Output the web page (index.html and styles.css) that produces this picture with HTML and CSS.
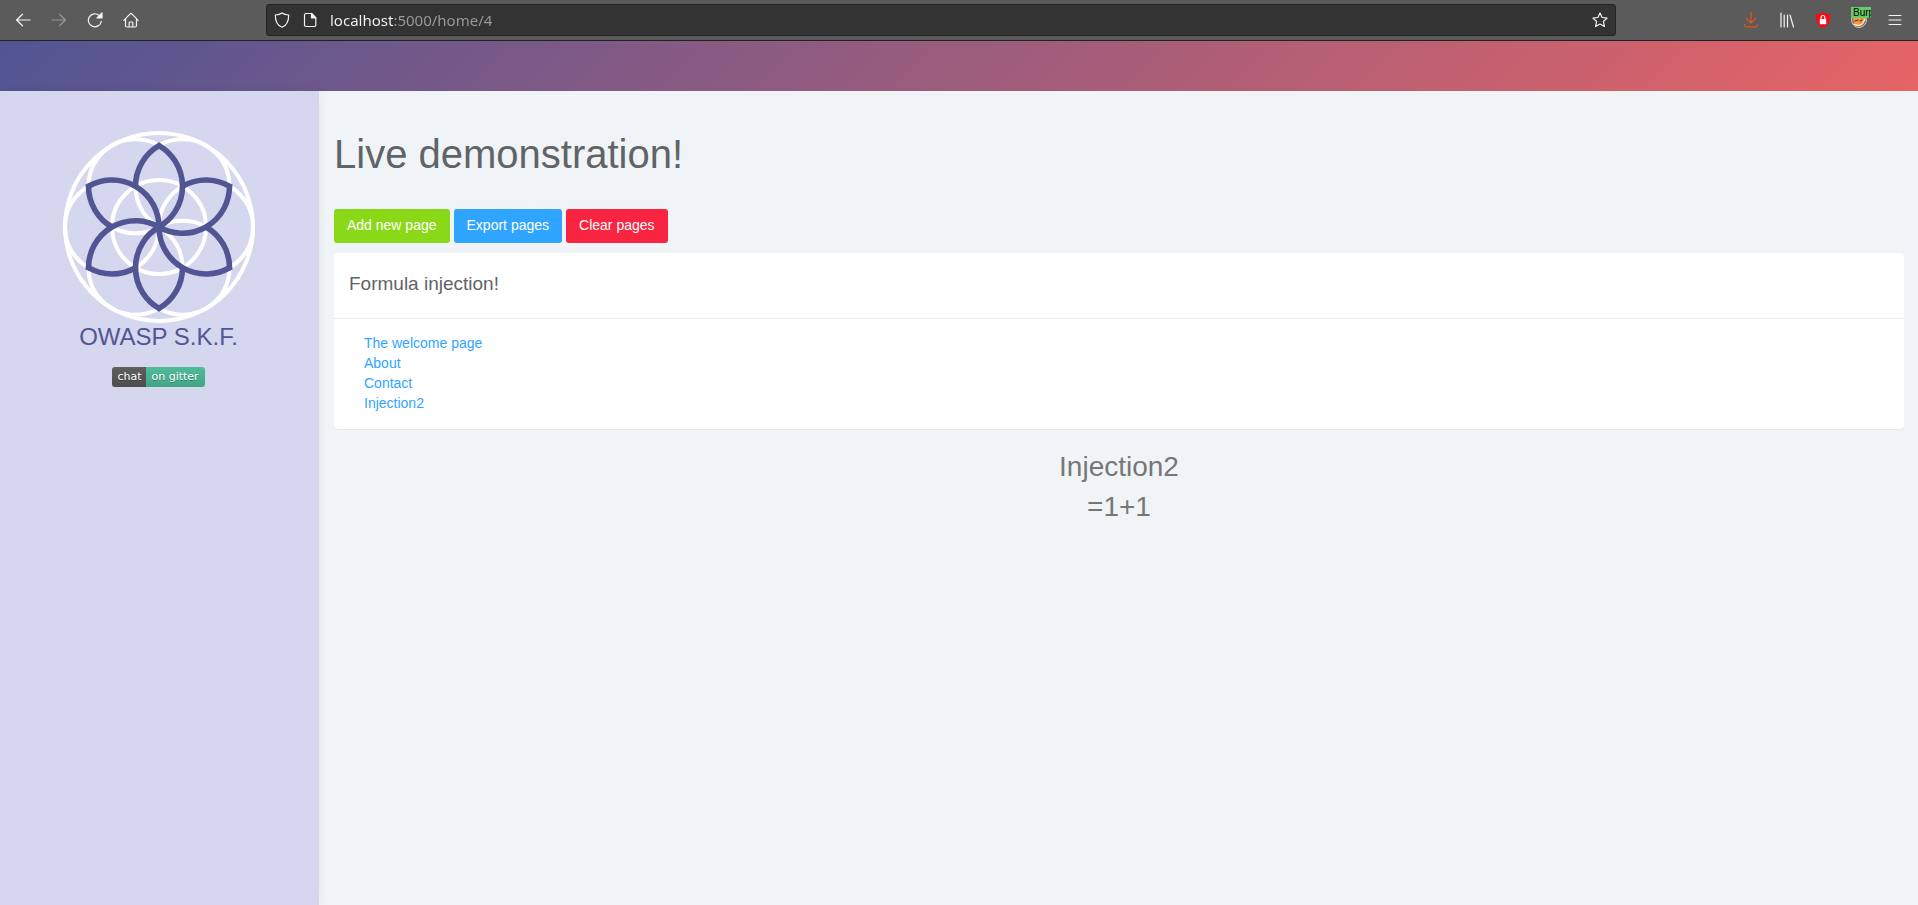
FILE: index.html
```html
<!DOCTYPE html>
<html lang="en">
<head>
<meta charset="utf-8">
<title>Live demonstration!</title>
<link rel="stylesheet" href="styles.css">
</head>
<body>
<header class="browser">
  <nav class="browser-nav" aria-label="Browser">
    <button class="tool" type="button" aria-label="Back"><svg viewBox="0 0 16 16"><path d="M15 8H1.500M7.500 2.200 1.600 8l5.900 5.800"/></svg></button>
    <button class="tool dim" type="button" aria-label="Forward"><svg viewBox="0 0 16 16"><path d="M1 8h13.500M8.500 2.200 14.400 8l-5.900 5.800"/></svg></button>
    <button class="tool" type="button" aria-label="Reload"><svg viewBox="0 0 16 16"><path d="M14.300 9.300A6.500 6.500 0 1 1 12.300 3.500"/><path class="fill" d="M15 1v5H10z"/></svg></button>
    <button class="tool" type="button" aria-label="Home"><svg viewBox="0 0 16 16"><path d="M.8 8.300 7.200 1.800a1.100 1.100 0 0 1 1.600 0l6.400 6.500M2.500 7v6.500A1.500 1.500 0 0 0 4 15h8a1.500 1.500 0 0 0 1.500-1.500V7M6.200 15v-4.200a.8.8 0 0 1 .8-.8h2a.8.800 0 0 1 .8.800V15"/></svg></button>
  </nav>
  <div class="address">
    <svg viewBox="0 0 16 16" aria-hidden="true"><path d="M8 .9C6 2.300 3.800 2.800 1.300 3c0 5.700 1.600 10.300 6.700 12.200C13.100 13.300 14.700 8.700 14.700 3 12.200 2.800 10 2.300 8 .9z"/></svg>
    <svg viewBox="0 0 16 16" aria-hidden="true"><path d="M4 1.500h5.500L13.800 6v7a1.500 1.500 0 0 1-1.500 1.500H4A1.500 1.500 0 0 1 2.500 13V3A1.500 1.500 0 0 1 4 1.500z"/><path class="fill" d="M9.500 1.500V6h4.300z"/></svg>
    <input class="url" type="text" aria-label="Address" value="localhost:5000/home/4">
    <button class="tool" type="button" aria-label="Bookmark"><svg viewBox="0 0 16 16"><path d="m8 1 2.100 4.500 5 .6-3.700 3.400 1 5L8 12l-4.400 2.500 1-5L.9 6.100l5-.6z"/></svg></button>
  </div>
  <nav class="browser-tools" aria-label="Extensions">
    <button class="tool download" type="button" aria-label="Downloads"><svg viewBox="0 0 16 16"><path d="M8 .5V11M3.500 6.500 8 11l4.500-4.500M1.500 12.500v.8a1.500 1.500 0 0 0 1.500 1.500h10a1.500 1.500 0 0 0 1.500-1.500v-.8"/></svg></button>
    <button class="tool" type="button" aria-label="Library"><svg viewBox="0 0 16 16"><path d="M2 1v14M5.200 3v12M8.500 3v12M11 3l3.500 12"/></svg></button>
    <button class="tool" type="button" aria-label="Shield"><svg viewBox="0 0 16 16"><path fill="#f20d12" stroke="none" d="M8 0c2 1.500 4.300 2.200 7.300 2.200C15.500 8.500 13.500 14 8 16 2.500 14 .5 8.500.7 2.200 3.700 2.200 6 1.500 8 0z"/><path fill="#fff" stroke="none" d="M4.800 7h6.400v5.200H4.800z"/><path d="M6.100 7V5.400a1.900 1.900 0 0 1 3.800 0V7"/></svg></button>
    <button class="tool" type="button" aria-label="Proxy: Burp"><svg viewBox="0 0 16 16"><circle cx="8" cy="8" r="7.500" fill="#777067" stroke="#c9c9c4" stroke-width="1"/><path fill="#f5983d" stroke="none" d="M2 6h12c0 4-2 8-6 8.500C4.500 14 2 10 2 6z"/><path d="M3 12c3 2 7 2 9-1l2-4" stroke="#fff0dc"/><path d="m4 9 3-1M9 9l2-1" stroke="#543c25"/></svg><span class="badge">Burp</span></button>
    <button class="tool" type="button" aria-label="Menu"><svg viewBox="0 0 16 16"><path d="M2 3.500h12M2 8h12M2 12.500h12"/></svg></button>
  </nav>
</header>
<div class="banner"></div>
<div class="layout">
  <aside class="sidebar">
    <svg class="logo" viewBox="-96 -96 192 192" role="img" aria-label="OWASP Security Knowledge Framework">
      <defs><path id="petal" d="M0-81.400A47 47 0 0 1 0 0M0-81.400A47 47 0 0 0-23.500-40.700"/></defs>
      <g fill="none" stroke="#fff" stroke-width="4">
        <circle r="94"/><circle r="47"/>
        <circle cx="47" r="47"/><circle cx="-47" r="47"/>
        <circle cx="23.500" cy="-40.700" r="47"/><circle cx="-23.500" cy="-40.700" r="47"/>
        <circle cx="23.500" cy="40.700" r="47"/><circle cx="-23.500" cy="40.700" r="47"/>
      </g>
      <g fill="none" stroke="#515594" stroke-width="5.600">
        <use href="#petal"/><use href="#petal" transform="rotate(60)"/><use href="#petal" transform="rotate(120)"/>
        <use href="#petal" transform="rotate(180)"/><use href="#petal" transform="rotate(240)"/><use href="#petal" transform="rotate(300)"/>
      </g>
      <g fill="#515594">
        <path id="tip" d="M0-85 4.500-81-4.500-81z"/><use href="#tip" transform="rotate(60)"/><use href="#tip" transform="rotate(120)"/>
        <use href="#tip" transform="rotate(180)"/><use href="#tip" transform="rotate(240)"/><use href="#tip" transform="rotate(300)"/>
      </g>
    </svg>
    <div class="brand">OWASP S.K.F.</div>
    <a class="gitter" href="#"><span class="gitter-label">chat</span><span class="gitter-value">on gitter</span></a>
  </aside>
  <main class="content">
    <h1>Live demonstration!</h1>
    <div class="actions">
      <button class="btn add" type="button">Add new page</button>
      <button class="btn export" type="button">Export pages</button>
      <button class="btn clear" type="button">Clear pages</button>
    </div>
    <section class="panel">
      <h2>Formula injection!</h2>
      <ul class="links">
        <li><a href="#">The welcome page</a></li>
        <li><a href="#">About</a></li>
        <li><a href="#">Contact</a></li>
        <li><a href="#">Injection2</a></li>
      </ul>
    </section>
    <div class="result">
      <p>Injection2</p>
      <p>=1+1</p>
    </div>
  </main>
</div>
</body>
</html>
```
FILE: styles.css
```css
* { box-sizing: border-box; }
body {
  margin: 0;
  min-height: 100vh;
  display: flex;
  flex-direction: column;
  background: #f1f4f7;
  color: #5f6468;
  font: 14px/20px "Liberation Sans", Arial, sans-serif;
}
h1, h2, p, ul { margin: 0; padding: 0; font-weight: 400; }
a { color: #30a5ff; text-decoration: none; }

/* Browser toolbar */
.browser {
  display: flex;
  align-items: center;
  height: 41px;
  background: #5b5b5b;
  border-bottom: 1px solid #222;
}
.browser svg {
  flex: none;
  display: block;
  width: 16px;
  height: 16px;
  fill: none;
  stroke: #f4f4f4;
  stroke-width: 1.200;
  stroke-linecap: round;
  stroke-linejoin: round;
}
.browser svg .fill { fill: #f4f4f4; }
.browser-nav, .browser-tools { display: flex; gap: 20px; }
.browser-nav { width: 266px; padding-left: 15px; }
.browser-tools { width: 302px; padding-right: 15px; justify-content: flex-end; }
.tool { position: relative; padding: 0; border: 0; background: none; }
.dim { opacity: 0.4; }
.browser .download svg { stroke: #e8501c; }
.badge {
  position: absolute;
  top: -5px;
  left: 0;
  width: 20px;
  height: 11px;
  padding-left: 2px;
  overflow: hidden;
  background: #66cc66;
  color: #000;
  font-size: 10px;
  line-height: 11px;
  text-align: left;
}
.address {
  flex: 1;
  display: flex;
  align-items: center;
  gap: 12px;
  height: 32px;
  padding: 0 7px;
  background: #333;
  border: 1px solid #222;
  border-radius: 3px;
}
.url {
  flex: 1;
  min-width: 0;
  height: 28px;
  padding: 0;
  border: 0;
  outline: 0;
  background: linear-gradient(90deg, #f9f9fa 64px, #9b9b9b 64px);
  background-clip: text;
  -webkit-background-clip: text;
  color: transparent;
  font: 15px/28px "Noto Sans", sans-serif;
}

/* Page */
.banner { height: 50px; background: linear-gradient(135deg, #515594, #e66465); }
.layout { flex: 1; display: flex; }
.sidebar {
  flex: none;
  width: 319px;
  padding: 40px 2px 0 0;
  display: flex;
  flex-direction: column;
  align-items: center;
  background: #d5d7ee;
  box-shadow: 1px 0 10px rgba(0, 0, 0, 0.05);
}
.logo { width: 192px; height: 192px; }
.brand { color: #515594; font-size: 24px; line-height: 28px; }
.gitter {
  display: flex;
  margin-top: 16px;
  overflow: hidden;
  border-radius: 3px;
  color: #fff;
  font: 11px/20px "DejaVu Sans", sans-serif;
  text-shadow: 0 1px 0 rgba(1, 1, 1, 0.3);
}
.gitter-label { padding: 0 5px; background: linear-gradient(#5f5f5f, #4d4d4d); }
.gitter-value { padding: 0 6px 0 5px; background: linear-gradient(#51bb9b, #41a585); }
.content { flex: 1; min-width: 0; padding: 40px 14px 40px 15px; }
h1 { font-size: 40px; line-height: 46px; }
.actions { display: flex; gap: 4px; margin: 32px 0 10px; }
.btn {
  height: 34px;
  padding: 0 13px 2px;
  border: 0;
  border-radius: 3px;
  color: #fff;
  font: 14px/20px "Liberation Sans", Arial, sans-serif;
}
.add { background: #8ad919; }
.export { background: #30a5ff; }
.clear { background: #f9243f; }
.panel { background: #fff; border-radius: 4px; box-shadow: 0 1px 1px rgba(0, 0, 0, 0.05); }
.panel h2 {
  padding: 8px 15px 12px;
  border-bottom: 1px solid #e9ecef;
  font-size: 19px;
  line-height: 45px;
}
.links { padding: 14px 30px 16px; list-style: none; }
.result {
  padding-top: 18px;
  color: #777;
  font-size: 28px;
  line-height: 40px;
  text-align: center;
}
```
